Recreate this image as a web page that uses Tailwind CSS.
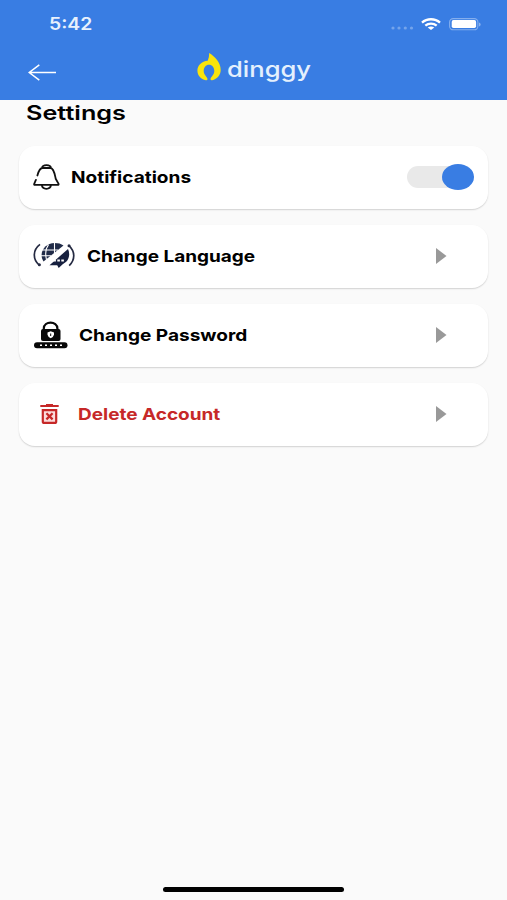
<!DOCTYPE html>
<html lang="en">

<head>
	<meta charset="UTF-8">
	<meta name="viewport" content="width=device-width, initial-scale=1.0">
	<title>Settings</title>
	<script src="https://cdn.jsdelivr.net/npm/@tailwindcss/browser@4"></script>
</head>

<body class="bg-[#fafafa] font-['Inter',sans-serif] text-black">
	<div class="flex h-[900px] w-[507px] flex-col overflow-hidden">
		<header class="h-[100px] shrink-0 bg-[#397de3] text-white">
			<!-- status bar -->
			<div class="flex h-[46px] items-center justify-between pt-0.5 pr-[26px] pl-[49px]">
				<span class="origin-left scale-x-[1.14] text-[17px] leading-none font-semibold text-[#e8f1fd]">5:42</span>
				<div class="flex items-center">
					<svg class="mt-2 mr-[7px] h-1 w-6" viewBox="0 0 24 4" fill="#fff" fill-opacity=".3">
						<circle cx="3" cy="2" r="1.6" />
						<circle cx="9" cy="2" r="1.6" />
						<circle cx="15.3" cy="2" r="1.6" />
						<circle cx="21.5" cy="2" r="1.6" />
					</svg>
					<svg class="mr-2 h-3 w-5" viewBox="0 0 20 12" fill="none" stroke="#fff" stroke-width="2.3">
						<path d="M1 4.6C6 .1 14 .1 19 4.6" />
						<path d="M4.3 7.7c3.3-2.9 8.1-2.9 11.4 0" />
						<path d="M10 12 6.7 9.5q3.3-2.1 6.6 0z" fill="#fff" stroke="none" />
					</svg>
					<svg class="h-[13px] w-8" viewBox="0 0 32 13" fill="none">
						<rect x=".6" y=".6" width="28.3" height="11.2" rx="3.6" stroke="#fff" stroke-opacity=".38" stroke-width="1.1" />
						<rect x="2.7" y="2.1" width="24.4" height="8" rx="1.8" fill="#fff" />
						<path d="M30.2 4.4c1.8.7 1.8 3.4 0 4.1z" fill="#fff" fill-opacity=".5" />
					</svg>
				</div>
			</div>
			<!-- nav bar -->
			<div class="flex h-[54px] pl-7">
				<svg class="mt-[18px] h-[17px] w-[29px]" viewBox="0 0 29 17" fill="none" stroke="#fff" stroke-width="1.5">
					<path d="M28 8.5H1.3M11.3.9 1.2 8.5l10.1 7.6" />
				</svg>
				<div class="ml-[140px] flex pt-[7px]">
					<svg class="h-[28px] w-6" viewBox="0 0 24 28">
						<path d="M12.2 0C17.4 3.4 23.7 8.9 23.7 17c0 4.9-3.3 9.1-8.6 10.3q-1.6.2-1.6-1.2c0-2.1 3.8-3.9 3.8-8 0-3.7-2.2-6.3-5.3-6.3s-5.3 2.6-5.3 6.3c0 4.1 3.8 5.9 3.8 8q0 1.4-1.6 1.2C3.7 26.2.4 22.6.4 17.6c0-5.2 4.3-9.4 10.3-9.9q1.5-2.7 1.5-7.7z" fill="#f9e40c" />
					</svg>
					<span class="mt-px ml-1.5 origin-left scale-x-[1.19] text-[21.5px] leading-[30px] font-medium text-[#e4f0fd]">dinggy</span>
				</div>
			</div>
		</header>

		<main class="px-[19px]">
			<h1 class="flex h-[46px] pt-px pl-[7px] text-[20px] leading-6 font-semibold"><span class="origin-left scale-x-[1.26]">Settings</span></h1>
			<div class="flex flex-col gap-4 text-[16.5px] leading-6 font-bold">
				<div class="flex h-[63px] items-center rounded-2xl bg-white pr-[13px] pb-0.5 pl-3.5 shadow-[0_1px_1.5px_rgba(0,0,0,.16)]">
					<svg class="h-[26px] w-[27px]" viewBox="0 0 27 26" fill="none" stroke="#111" stroke-width="1.8" stroke-linecap="round" stroke-linejoin="round">
						<path d="M9 4C9.5.2 17.5.2 18 4M4.4 11.5C5.5 7.4 6.6 4 9.500 4h8c3.5.3 4.2 6.200 5.200 10.700l2.900 5.200q.2 1-.8 1H2q-1.200 0-.8-1.100l1.700-3.900M8.800 21.200c.7 4.800 8.500 4.800 9.200 0" />
					</svg>
					<span class="ml-[11px] origin-left scale-x-[1.155]">Notifications</span>
					<div class="relative mr-[1px] ml-auto h-[26px] w-[67px]">
						<div class="mt-[2px] h-[22px] w-[64px] rounded-full bg-[#e9e9e9]"></div>
						<div class="absolute top-0 right-0 h-[26px] w-8 rounded-[50%] bg-[#397de3]"></div>
					</div>
				</div>
				<div class="flex h-[63px] items-center rounded-2xl bg-white pr-[41px] pb-0.5 pl-3.5 shadow-[0_1px_1.5px_rgba(0,0,0,.16)]">
					<svg class="h-[28px] w-[42px]" viewBox="0 0 42 28" fill="none">
						<path d="M7 2.4C-.4 8-.4 17 6 23M36 3.600c6.300 6 6.300 14 .2 20" stroke="#252a42" stroke-width="1.7" />
						<circle cx="6.4" cy="22.7" r="1.5" fill="#252a42" />
						<circle cx="36" cy="3.8" r="1.5" fill="#252a42" />
						<path d="M10.500 19.500C5 10.500 12 1.200 21.500 1c4 0 6.500.8 9 2.500z" fill="#202b48" />
						<path d="M9 8h16M8 13.800h10M15.500 2.600c-3 4-3.500 9-2 15M21.500 1v12" stroke="#fff" stroke-width="1.1" />
						<path d="M16.500 23.200 35 7c2 4.200 1.500 9.500-1.800 12.800l-3.500 2.500-4 3.700-1.500-2.800z" fill="#17203f" />
						<path d="M20.300 18.500h2.600m1.400 0h2.600m1.400 0h2.600" stroke="#fff" stroke-width="2" />
					</svg>
					<span class="ml-3 origin-left scale-x-[1.15]">Change Language</span>
					<svg class="ml-auto h-4 w-[11px]" viewBox="0 0 11 16"><path d="M0 0v16L10.5 8z" fill="#999" /></svg>
				</div>
				<div class="flex h-[63px] items-center rounded-2xl bg-white pr-[41px] pb-0.5 pl-[15px] shadow-[0_1px_1.5px_rgba(0,0,0,.16)]">
					<svg class="h-[28px] w-[34px]" viewBox="0 0 34 28" fill="none">
						<path d="M9.8 9V7.5C9.8-.4 23.4-.4 23.4 7.5V9" stroke="#080808" stroke-width="2.2" />
						<rect x="7" y="8" width="19.5" height="12" rx="2" fill="#080808" />
						<rect y="21.3" width="33.5" height="6" rx="3" fill="#080808" />
						<path d="m16.7 10.300 3.300 1.200v2.300q-.5 2.300-3.300 3.400-2.700-1.100-3.200-3.400v-2.300z" fill="#fff" />
						<path d="M16.7 12.5v2.5" stroke="#080808" stroke-width="1" />
						<path d="M6 24.3h2m3 0h2m3 0h2m3 0h2m3 0h2" stroke="#fff" stroke-width="1.5" />
					</svg>
					<span class="ml-[11px] origin-left scale-x-[1.155]">Change Password</span>
					<svg class="ml-auto h-4 w-[11px]" viewBox="0 0 11 16"><path d="M0 0v16L10.5 8z" fill="#999" /></svg>
				</div>
				<div class="flex h-[63px] items-center rounded-2xl bg-white pr-[41px] pb-0.5 pl-[21px] text-[#c62828] shadow-[0_1px_1.5px_rgba(0,0,0,.16)]">
					<svg class="mt-px h-5 w-[19px]" viewBox="0 0 19 20" fill="none" stroke="#c62828">
						<path d="M.3 2h18.4M6 1h7" stroke-width="2" />
						<path d="M2.8 6.1h13.4v11.3q0 1.5-1.5 1.5H4.3q-1.5 0-1.5-1.5z" fill="#fbdcdc" stroke-width="2.2" />
						<path d="m6.4 9.2 6.2 6.2m0-6.2-6.2 6.2" stroke-width="2.2" />
					</svg>
					<span class="ml-[19px] origin-left scale-x-[1.15]">Delete Account</span>
					<svg class="ml-auto h-4 w-[11px]" viewBox="0 0 11 16"><path d="M0 0v16L10.5 8z" fill="#999" /></svg>
				</div>
			</div>
		</main>

		<!-- home indicator -->
		<div class="mt-auto mb-2 ml-[163px] h-[5px] w-[181px] shrink-0 rounded-full bg-black"></div>
	</div>
</body>

</html>
